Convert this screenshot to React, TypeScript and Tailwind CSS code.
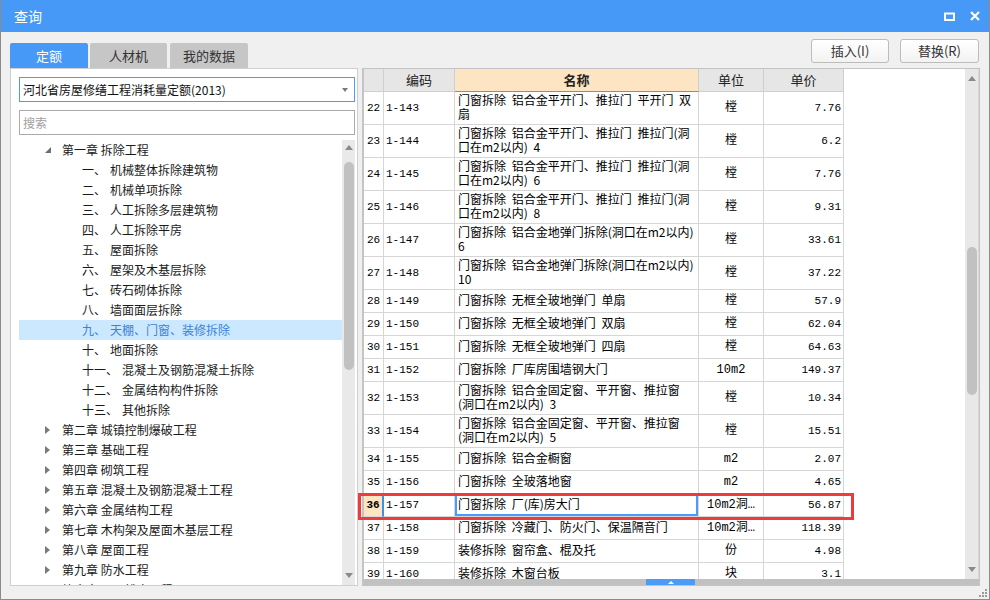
import React from 'react'

interface TreeItem {
  chapter?: boolean
  open?: boolean
  num?: string
  label: string
  selected?: boolean
}

interface QuotaRow {
  no: number
  code: string
  name: string[]
  unit: string
  price: string
}

const tree: TreeItem[] = [
  { chapter: true, open: true, label: '第一章 拆除工程' },
  { num: '一、', label: '机械整体拆除建筑物' },
  { num: '二、', label: '机械单项拆除' },
  { num: '三、', label: '人工拆除多层建筑物' },
  { num: '四、', label: '人工拆除平房' },
  { num: '五、', label: '屋面拆除' },
  { num: '六、', label: '屋架及木基层拆除' },
  { num: '七、', label: '砖石砌体拆除' },
  { num: '八、', label: '墙面面层拆除' },
  { num: '九、', label: '天棚、门窗、装修拆除', selected: true },
  { num: '十、', label: '地面拆除' },
  { num: '十一、', label: '混凝土及钢筋混凝土拆除' },
  { num: '十二、', label: '金属结构构件拆除' },
  { num: '十三、', label: '其他拆除' },
  { chapter: true, label: '第二章 城镇控制爆破工程' },
  { chapter: true, label: '第三章 基础工程' },
  { chapter: true, label: '第四章 砌筑工程' },
  { chapter: true, label: '第五章 混凝土及钢筋混凝土工程' },
  { chapter: true, label: '第六章 金属结构工程' },
  { chapter: true, label: '第七章 木构架及屋面木基层工程' },
  { chapter: true, label: '第八章 屋面工程' },
  { chapter: true, label: '第九章 防水工程' },
  { chapter: true, label: '第十章 屋面排水工程' },
]

const rows: QuotaRow[] = [
  { no: 22, code: '1-143', name: ['门窗拆除 铝合金平开门、推拉门 平开门 双', '扇'], unit: '樘', price: '7.76' },
  { no: 23, code: '1-144', name: ['门窗拆除 铝合金平开门、推拉门 推拉门(洞', '口在m2以内) 4'], unit: '樘', price: '6.2' },
  { no: 24, code: '1-145', name: ['门窗拆除 铝合金平开门、推拉门 推拉门(洞', '口在m2以内) 6'], unit: '樘', price: '7.76' },
  { no: 25, code: '1-146', name: ['门窗拆除 铝合金平开门、推拉门 推拉门(洞', '口在m2以内) 8'], unit: '樘', price: '9.31' },
  { no: 26, code: '1-147', name: ['门窗拆除 铝合金地弹门拆除(洞口在m2以内)', '6'], unit: '樘', price: '33.61' },
  { no: 27, code: '1-148', name: ['门窗拆除 铝合金地弹门拆除(洞口在m2以内)', '10'], unit: '樘', price: '37.22' },
  { no: 28, code: '1-149', name: ['门窗拆除 无框全玻地弹门 单扇'], unit: '樘', price: '57.9' },
  { no: 29, code: '1-150', name: ['门窗拆除 无框全玻地弹门 双扇'], unit: '樘', price: '62.04' },
  { no: 30, code: '1-151', name: ['门窗拆除 无框全玻地弹门 四扇'], unit: '樘', price: '64.63' },
  { no: 31, code: '1-152', name: ['门窗拆除 厂库房围墙钢大门'], unit: '10m2', price: '149.37' },
  { no: 32, code: '1-153', name: ['门窗拆除 铝合金固定窗、平开窗、推拉窗', '(洞口在m2以内) 3'], unit: '樘', price: '10.34' },
  { no: 33, code: '1-154', name: ['门窗拆除 铝合金固定窗、平开窗、推拉窗', '(洞口在m2以内) 5'], unit: '樘', price: '15.51' },
  { no: 34, code: '1-155', name: ['门窗拆除 铝合金橱窗'], unit: 'm2', price: '2.07' },
  { no: 35, code: '1-156', name: ['门窗拆除 全玻落地窗'], unit: 'm2', price: '4.65' },
  { no: 36, code: '1-157', name: ['门窗拆除 厂(库)房大门'], unit: '10m2洞…', price: '56.87' },
  { no: 37, code: '1-158', name: ['门窗拆除 冷藏门、防火门、保温隔音门'], unit: '10m2洞…', price: '118.39' },
  { no: 38, code: '1-159', name: ['装修拆除 窗帘盒、棍及托'], unit: '份', price: '4.98' },
  { no: 39, code: '1-160', name: ['装修拆除 木窗台板'], unit: '块', price: '3.1' },
]

function ArrowUp() {
  return (
    <svg width="8" height="5" viewBox="0 0 8 5"><path d="M0 5 L4 0 L8 5 Z" fill="#8a8a8a" /></svg>
  )
}

function ArrowDown() {
  return (
    <svg width="8" height="5" viewBox="0 0 8 5"><path d="M0 0 L8 0 L4 5 Z" fill="#8a8a8a" /></svg>
  )
}

function TreeRow({ item }: { item: TreeItem }) {
  if (item.chapter) {
    return (
      <div className="h-[20px] flex items-center pl-[26px] text-[12px] text-[#1a1a1a] whitespace-nowrap">
        <span className="w-[17px] flex items-center">
          {item.open ? (
            <svg width="6" height="6" viewBox="0 0 6 6"><path d="M6 0 L6 6 L0 6 Z" fill="#6e6e6e" /></svg>
          ) : (
            <svg width="5" height="8" viewBox="0 0 5 8"><path d="M0 0 L5 4 L0 8 Z" fill="#7a7a7a" /></svg>
          )}
        </span>
        {item.label}
      </div>
    )
  }
  return (
    <div
      className={`h-[20px] flex items-center pl-[63px] text-[12px] whitespace-nowrap ${
        item.selected ? 'bg-[#cce8ff] text-[#3b83d9]' : 'text-[#1a1a1a]'
      }`}
    >
      <span>{item.num}</span>
      <span className="ml-[4px]">{item.label}</span>
    </div>
  )
}

function GridRow({ r }: { r: QuotaRow }) {
  const sel = r.no === 36
  const tall = r.name.length > 1
  return (
    <div className={`flex shrink-0 ${tall ? 'h-[33px]' : 'h-[23px]'}`}>
      <div
        className={`w-[20px] shrink-0 flex items-center justify-center border-b border-r border-[#d6d6d6] text-[11px] ${
          sel ? 'bg-[#fde5c4] font-bold border-r-[#3d8ff0] border-r-2' : ''
        }`}
      >
        {r.no}
      </div>
      <div className="w-[71px] shrink-0 flex items-center pl-[2px] border-b border-r border-[#d6d6d6] text-[11px]">
        {r.code}
      </div>
      <div
        className={`w-[244px] shrink-0 flex flex-col justify-center pl-[3px] pb-[2px] border-b border-r border-[#d6d6d6] font-['Noto_Sans_CJK_SC',sans-serif] text-[12px] leading-[14px] [word-spacing:3px] whitespace-nowrap overflow-hidden ${
          sel ? 'shadow-[inset_0_0_0_2px_#4a9cf8]' : ''
        }`}
      >
        {r.name.map((l, i) => (
          <span key={i}>{l}</span>
        ))}
      </div>
      <div className="w-[65px] shrink-0 flex items-center justify-center border-b border-r border-[#d6d6d6] text-[12px] whitespace-nowrap">
        {r.unit}
      </div>
      <div className="w-[80px] shrink-0 flex items-center justify-end pr-[2px] border-b border-r border-[#d6d6d6] text-[11px]">
        {r.price}
      </div>
    </div>
  )
}

export default function App() {
  return (
    <div className="relative w-[990px] h-[600px] flex flex-col bg-[#f0f0f0] border-x border-b border-[#8c8c8c] font-['Noto_Sans_CJK_SC',sans-serif] overflow-hidden">
      {/* title bar */}
      <div className="h-[32px] shrink-0 flex items-center justify-between bg-[#4799f7] pl-[13px] pr-[9px]">
        <span className="text-[14px] text-white">查询</span>
        <div className="flex items-center gap-[15px]">
          <svg width="11" height="9" viewBox="0 0 11 9">
            <rect x="1" y="1.5" width="9" height="6.5" fill="none" stroke="#fff" strokeWidth="2" />
          </svg>
          <svg width="10" height="10" viewBox="0 0 10 10">
            <path d="M1 1 L9 9 M9 1 L1 9" stroke="#fff" strokeWidth="2.2" />
          </svg>
        </div>
      </div>

      <div className="flex-1 flex gap-[4px] pl-[9px] pr-[9px]">
        {/* left column */}
        <div className="w-[348px] flex flex-col pt-[11px]">
          <div className="h-[25px] flex items-end gap-[2px] text-[13px]">
            <div className="w-[78px] h-[25px] flex items-center justify-center bg-[#4799f7] text-white rounded-t-[2px]">定额</div>
            <div className="w-[77px] h-[25px] flex items-center justify-center bg-[#c6c6c6] text-[#333] rounded-t-[2px]">人材机</div>
            <div className="w-[78px] h-[25px] ml-[1px] flex items-center justify-center bg-[#c6c6c6] text-[#333] rounded-t-[2px]">我的数据</div>
          </div>
          <div className="h-[518px] flex flex-col bg-white border border-[#cfcfcf] pl-[8px] pr-[2px] pt-[8px]">
            <div className="h-[25px] shrink-0 flex items-center justify-between border border-[#4a9cf8] pl-[3px] pr-[6px] text-[12px] text-[#111]">
              <span>河北省房屋修缮工程消耗量定额(2013)</span>
              <svg width="6" height="4" viewBox="0 0 6 4"><path d="M0 0 L6 0 L3 4 Z" fill="#7a7a7a" /></svg>
            </div>
            <div className="h-[25px] shrink-0 mt-[8px] flex items-center border border-[#ababab] pl-[3px] text-[12px] text-[#a0a0a0]">
              搜索
            </div>
            <div className="flex-1 mt-[5px] flex min-h-0">
              <div className="flex-1 overflow-hidden">
                {tree.map((t, i) => (
                  <TreeRow key={i} item={t} />
                ))}
              </div>
              <div className="w-[13px] flex flex-col items-center bg-[#e9e9e9]">
                <div className="h-[10px] flex items-end"><ArrowUp /></div>
                <div className="h-[12px]" />
                <div className="w-[10px] h-[208px] rounded-full bg-[#c1c1c1]" />
                <div className="flex-1" />
                <div className="h-[12px] flex items-start"><ArrowDown /></div>
              </div>
            </div>
          </div>
        </div>

        {/* right column */}
        <div className="w-[618px] flex flex-col pt-[7px]">
          <div className="h-[24px] flex justify-end gap-[11px] pr-[1px] text-[13px] text-[#333]">
            <div className="w-[78px] flex items-center justify-center rounded-[3px] border border-[#bcbcbc] bg-gradient-to-b from-white to-[#f3f3f3]">插入(I)</div>
            <div className="w-[79px] flex items-center justify-center rounded-[3px] border border-[#bcbcbc] bg-gradient-to-b from-white to-[#f3f3f3]">替换(R)</div>
          </div>
          <div className="mt-[5px] h-[518px] flex flex-col bg-white border border-[#c4c4c4] border-l-2 font-['Liberation_Mono','Noto_Sans_CJK_SC',monospace] text-black">
            <div className="flex-1 flex min-h-0">
              <div className="flex-1 flex flex-col overflow-hidden">
                <div className="h-[23px] shrink-0 flex font-['Noto_Sans_CJK_SC',sans-serif] text-[13px] text-[#222]">
                  <div className="w-[20px] bg-[#e6e6e6] border-b border-r border-[#cfcfcf]" />
                  <div className="w-[71px] flex items-center justify-center bg-[#e6e6e6] border-b border-r border-[#cfcfcf]">编码</div>
                  <div className="w-[244px] flex items-center justify-center bg-[#fde5c4] border-b border-r border-[#cfcfcf] border-b-[#4a9cf8] font-bold">名称</div>
                  <div className="w-[65px] flex items-center justify-center bg-[#e6e6e6] border-b border-r border-[#cfcfcf]">单位</div>
                  <div className="w-[80px] flex items-center justify-center bg-[#e6e6e6] border-b border-r border-[#cfcfcf]">单价</div>
                </div>
                {rows.map(r => (
                  <GridRow key={r.no} r={r} />
                ))}
              </div>
              <div className="w-[14px] flex flex-col items-center bg-[#e8e8e8] border-r border-[#d8d8d8]">
                <div className="h-[12px] flex items-end"><ArrowUp /></div>
                <div className="h-[166px]" />
                <div className="w-[10px] h-[148px] rounded-full bg-[#c1c1c1]" />
                <div className="flex-1" />
                <div className="h-[12px] flex items-start"><ArrowDown /></div>
              </div>
            </div>
            <div className="h-[6px] shrink-0 flex bg-[#c1c1c1]">
              <div className="w-[282px]" />
              <div className="w-[49px] flex items-center justify-center bg-[#4a9cf8]">
                <svg width="6" height="3" viewBox="0 0 6 3"><path d="M0 3 L3 0 L6 3 Z" fill="#fff" /></svg>
              </div>
            </div>
          </div>
        </div>
      </div>

      {/* annotation around the selected row */}
      <div className="absolute left-[357px] top-[493px] w-[496px] h-[27px] border-[3px] border-[#ee3b3b] pointer-events-none" />

      {/* resize grip */}
      <svg className="absolute right-[2px] bottom-[2px]" width="8" height="8" viewBox="0 0 8 8">
        <rect x="6" y="0" width="2" height="2" fill="#9a9a9a" />
        <rect x="3" y="3" width="2" height="2" fill="#9a9a9a" />
        <rect x="6" y="3" width="2" height="2" fill="#9a9a9a" />
        <rect x="0" y="6" width="2" height="2" fill="#9a9a9a" />
        <rect x="3" y="6" width="2" height="2" fill="#9a9a9a" />
        <rect x="6" y="6" width="2" height="2" fill="#9a9a9a" />
      </svg>
    </div>
  )
}
